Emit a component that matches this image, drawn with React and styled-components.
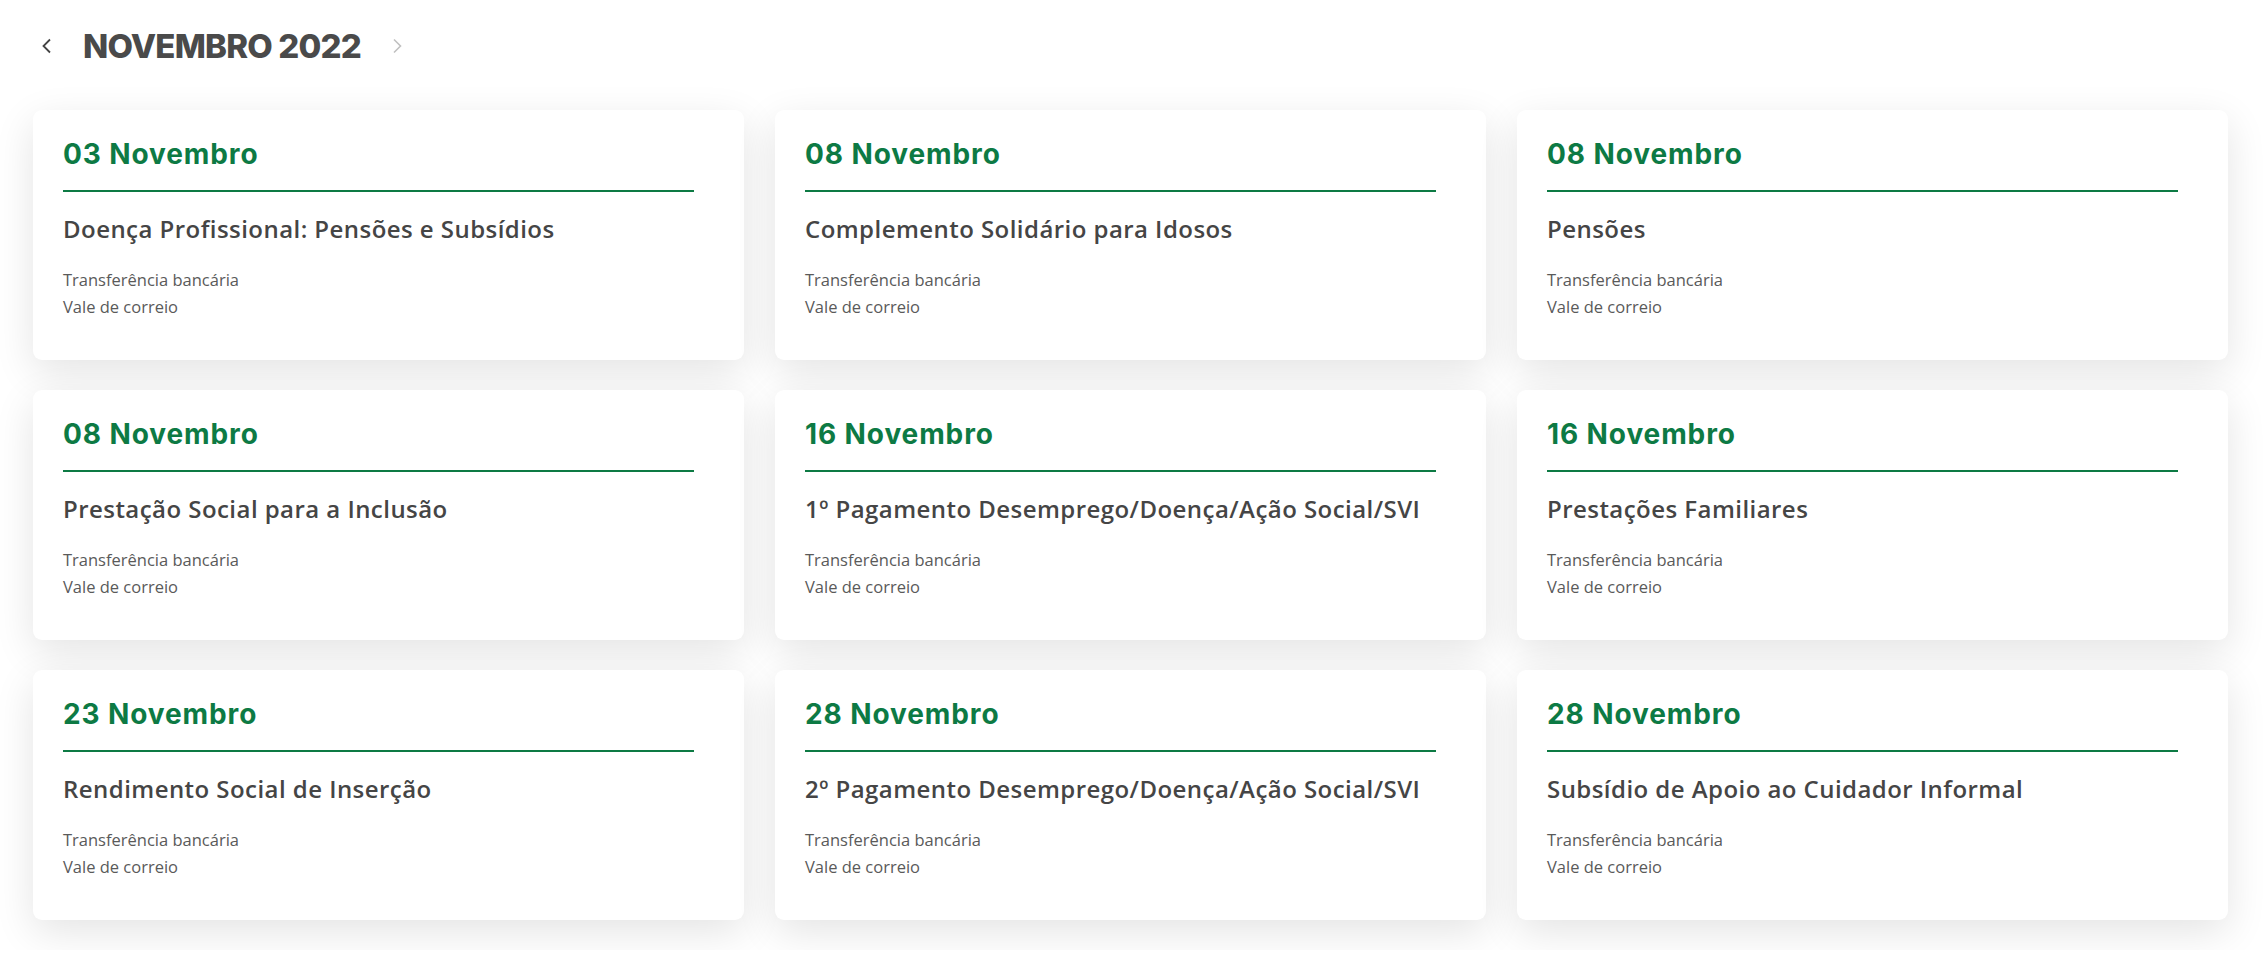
import React from 'react';
import styled, { createGlobalStyle } from 'styled-components';

const GlobalStyle = createGlobalStyle`
  body {
    margin: 0;
    background: #ffffff;
    font-family: 'Open Sans', 'Liberation Sans', sans-serif;
  }
`;

const payments = [
  { date: '03 Novembro', title: 'Doença Profissional: Pensões e Subsídios' },
  { date: '08 Novembro', title: 'Complemento Solidário para Idosos' },
  { date: '08 Novembro', title: 'Pensões' },
  { date: '08 Novembro', title: 'Prestação Social para a Inclusão' },
  { date: '16 Novembro', title: '1º Pagamento Desemprego/Doença/Ação Social/SVI' },
  { date: '16 Novembro', title: 'Prestações Familiares' },
  { date: '23 Novembro', title: 'Rendimento Social de Inserção' },
  { date: '28 Novembro', title: '2º Pagamento Desemprego/Doença/Ação Social/SVI' },
  { date: '28 Novembro', title: 'Subsídio de Apoio ao Cuidador Informal' },
];

const App = () => {
  return (
    <Page>
      <GlobalStyle />
      <MonthBar>
        <ArrowButton>
          <svg width="11" height="16" viewBox="0 0 11 16">
            <polyline points="9,1.5 2.5,8 9,14.5" fill="none" stroke="#444" strokeWidth="1.8" />
          </svg>
        </ArrowButton>
        <MonthTitle>NOVEMBRO 2022</MonthTitle>
        <ArrowButton>
          <svg width="11" height="16" viewBox="0 0 11 16">
            <polyline points="2,1.5 8.5,8 2,14.5" fill="none" stroke="#c0c0c0" strokeWidth="1.6" />
          </svg>
        </ArrowButton>
      </MonthBar>

      <CardGrid>
        {payments.map((item, i) => (
          <Card key={i}>
            <DateTitle>{item.date}</DateTitle>
            <Divider />
            <PaymentName>{item.title}</PaymentName>
            <Method>Transferência bancária</Method>
            <Method>Vale de correio</Method>
          </Card>
        ))}
      </CardGrid>
    </Page>
  );
};

export default App;

const Page = styled.div`
  padding: 26px 39px 30px 33px;
`;

const MonthBar = styled.div`
  display: flex;
  align-items: center;
  gap: 31px;
  padding-left: 8px;
  height: 40px;
`;

const ArrowButton = styled.button`
  display: flex;
  align-items: center;
  border: none;
  background: transparent;
  padding: 0;
  cursor: pointer;
`;

const MonthTitle = styled.h1`
  margin: 0;
  font-family: Inter, 'Liberation Sans', sans-serif;
  font-size: 33px;
  font-weight: 800;
  color: #4a4a4a;
  letter-spacing: -0.8px;
`;

const CardGrid = styled.div`
  display: grid;
  grid-template-columns: repeat(3, 711px);
  column-gap: 31px;
  row-gap: 30px;
  margin-top: 44px;
`;

const Card = styled.div`
  height: 250px;
  box-sizing: border-box;
  padding: 27px 50px 0 30px;
  background: #ffffff;
  border-radius: 9px;
  box-shadow: 0 12px 40px rgba(0, 0, 0, 0.11);
`;

const DateTitle = styled.div`
  font-family: Inter, 'Liberation Sans', sans-serif;
  font-size: 28px;
  font-weight: 700;
  color: #0d7a44;
  letter-spacing: 0.9px;
  line-height: 34px;
`;

const Divider = styled.div`
  height: 2px;
  background: #0d7a44;
  margin-top: 19px;
`;

const PaymentName = styled.div`
  margin: 22px 0 22px;
  font-size: 24px;
  font-weight: 600;
  color: #454545;
  line-height: 30px;
  letter-spacing: 0.45px;
`;

const Method = styled.div`
  font-size: 16.5px;
  color: #5a5a5a;
  line-height: 27px;
`;
